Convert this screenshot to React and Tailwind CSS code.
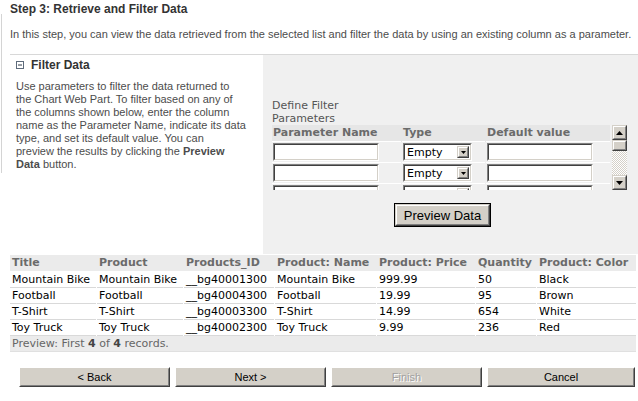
import React from "react";

function Inset({ className = "", children }) {
  return (
    <div className={`border border-t-[#808080] border-l-[#808080] border-b-white border-r-white ${className}`}>
      <div className="h-full border border-t-[#404040] border-l-[#404040] border-b-[#d4d0c8] border-r-[#d4d0c8] bg-white">
        {children}
      </div>
    </div>
  );
}

function Raised({ className = "", children }) {
  return (
    <div className={`border border-t-[#d4d0c8] border-l-[#d4d0c8] border-b-[#404040] border-r-[#404040] ${className}`}>
      <div className="h-full w-full border border-t-white border-l-white border-b-[#808080] border-r-[#808080] bg-[#d4d0c8] flex items-center justify-center">
        {children}
      </div>
    </div>
  );
}

function Down({ small }) {
  return small ? (
    <svg width="5" height="3" viewBox="0 0 5 3">
      <polygon points="0,0 5,0 2.5,3" fill="#000" />
    </svg>
  ) : (
    <svg width="7" height="4" viewBox="0 0 7 4">
      <polygon points="0,0 7,0 3.5,4" fill="#000" />
    </svg>
  );
}
function Up() {
  return (
    <svg width="7" height="4" viewBox="0 0 7 4">
      <polygon points="0,4 7,4 3.5,0" fill="#000" />
    </svg>
  );
}

function ParamRow({ hideText }) {
  return (
    <div className="grid grid-cols-[129px_83px_124px] gap-x-px">
      <div className="pl-px pt-px pb-px border-b border-white">
        <Inset className="w-[106px] h-[18px]" />
      </div>
      <div className="pl-px pt-px pb-px border-b border-white">
        <Inset className="w-[69px] h-[18px]">
          <div className="flex h-full items-start">
            <div className="flex-1 pl-[2px] pt-[1px] text-[11px] leading-[13px] text-black font-['DejaVu_Sans',sans-serif]">
              {hideText ? "" : "Empty"}
            </div>
            <Raised className="w-[12px] h-[12px] mt-px mr-px">
              <Down small />
            </Raised>
          </div>
        </Inset>
      </div>
      <div className="pl-px pt-px pb-px border-b border-white">
        <Inset className="w-[106px] h-[18px]" />
      </div>
    </div>
  );
}

const rows = [
  ["Mountain Bike", "Mountain Bike", "__bg40001300", "Mountain Bike", "999.99", "50", "Black"],
  ["Football", "Football", "__bg40004300", "Football", "19.99", "95", "Brown"],
  ["T-Shirt", "T-Shirt", "__bg40003300", "T-Shirt", "14.99", "654", "White"],
  ["Toy Truck", "Toy Truck", "__bg40002300", "Toy Truck", "9.99", "236", "Red"],
];
const heads = ["Title", "Product", "Products_ID", "Product: Name", "Product: Price", "Quantity", "Product: Color"];

function WizButton({ label, disabled, className = "w-[151px]" }) {
  return (
    <div className={`h-[20px] border border-t-white border-l-white border-b-[#404040] border-r-[#404040] ${className}`}>
      <div className="h-full w-full border border-t-[#d4d0c8] border-l-[#d4d0c8] border-b-[#808080] border-r-[#808080] bg-[#d4d0c8] flex items-center justify-center">
        <span
          className={
            disabled
              ? "text-[11px] leading-[13px] text-[#a0a0a0] [text-shadow:1px_1px_0_#ffffff]"
              : "text-[11px] leading-[13px] text-black"
          }
        >
          {label}
        </span>
      </div>
    </div>
  );
}

export default function App() {
  return (
    <div className="w-[638px] h-[401px] bg-white overflow-hidden flex font-['Liberation_Sans',Arial,sans-serif]">
      <div className="w-[2px] shrink-0">
        <div className="ml-px mt-[14px] h-[159px] w-px bg-[#d4d4d4]" />
      </div>
      <div className="w-[636px] shrink-0">
        <div className="pt-[2px] pl-[8px] text-[12px] leading-[14px] font-bold text-[#333333]">
          Step 3: Retrieve and Filter Data
        </div>
        <div className="mt-[12px] pl-[8px] text-[11px] leading-[13px] text-[#4c4c4c] whitespace-nowrap">
          In this step, you can view the data retrieved from the selected list and filter the data by using an existing column as a parameter.
        </div>
        <div className="mt-[13px] ml-[8px] h-px bg-[#d8d8d8]" />
        <div className="flex h-[199px]">
          <div className="ml-[8px] w-[253px] pl-[6px] pt-[3px]">
            <div className="flex items-center h-[14px]">
              <svg width="8" height="8" viewBox="0 0 8 8" className="shrink-0">
                <rect x="0.5" y="0.5" width="7" height="7" fill="#ffffff" stroke="#5d6b7b" />
                <line x1="2" y1="4" x2="6" y2="4" stroke="#2e3b48" strokeWidth="1" />
              </svg>
              <span className="ml-[7px] text-[12px] leading-[14px] font-bold text-[#333333]">Filter Data</span>
            </div>
            <div className="mt-[8px] text-[11px] leading-[13px] text-[#4c4c4c] whitespace-nowrap">
              Use parameters to filter the data returned to
              <br />
              the Chart Web Part. To filter based on any of
              <br />
              the columns shown below, enter the column
              <br />
              name as the Parameter Name, indicate its data
              <br />
              type, and set its default value. You can
              <br />
              preview the results by clicking the <b>Preview</b>
              <br />
              <b>Data</b> button.
            </div>
          </div>
          <div className="flex-1 bg-[#f0f0f0] pt-[44px] pl-[9px]">
            <div className="text-[11px] leading-[13px] text-[#555555] font-['DejaVu_Sans',sans-serif]">
              Define Filter
              <br />
              Parameters
            </div>
            <div className="flex h-[65px]">
              <div className="w-[338px] h-[65px] overflow-hidden font-['DejaVu_Sans',sans-serif]">
                <div className="grid grid-cols-[129px_83px_124px] gap-x-px bg-[#e6e6e6]">
                  {["Parameter Name", "Type", "Default value"].map((h) => (
                    <div key={h} className="pl-px h-[17px] border-b border-white text-[11px] leading-[16px] font-bold text-[#6b6b6b] whitespace-nowrap">
                      {h}
                    </div>
                  ))}
                </div>
                <ParamRow />
                <ParamRow />
                <ParamRow hideText />
              </div>
              <div className="ml-[2px] w-[15px] flex flex-col">
                <Raised className="w-[15px] h-[15px]">
                  <Up />
                </Raised>
                <Raised className="w-[15px] h-[11px]" />
                <div className="w-[15px] h-[24px] bg-[repeating-conic-gradient(#d4d0c8_0%_25%,#ffffff_0%_50%)] bg-size-[2px_2px]" />
                <Raised className="w-[15px] h-[15px]">
                  <Down />
                </Raised>
              </div>
            </div>
            <div className="mt-[13px] ml-[122px] w-[97px] h-[24px] border border-black">
              <Raised className="w-full h-full">
                <span className="text-[13px] leading-[15px] text-black">Preview Data</span>
              </Raised>
            </div>
          </div>
        </div>
        <div className="mt-px ml-[8px] w-[626px] font-['DejaVu_Sans',sans-serif] text-[11px]">
          <div className="grid grid-cols-[86px_86px_90px_101px_98px_60px_99px] gap-x-px bg-[#ebebeb] h-[16px] mb-px">
            {heads.map((h) => (
              <div key={h} className="pl-[2px] leading-[16px] font-bold text-[#6b6b6b] whitespace-nowrap">
                {h}
              </div>
            ))}
          </div>
          {rows.map((r, i) => (
            <div key={i} className="grid grid-cols-[86px_86px_90px_101px_98px_60px_99px] gap-x-px">
              {r.map((c, j) => (
                <div key={j} className="pl-[2px] h-[16px] leading-[15px] border-b border-[#d9d9d9] text-black whitespace-nowrap">
                  {c}
                </div>
              ))}
            </div>
          ))}
          <div className="h-[16px] bg-[#ebebeb] border-b border-[#e0e0e0] pl-[2px] leading-[15px] text-[#666666]">
            Preview: First <b className="text-[#444444]">4</b> of <b className="text-[#444444]">4</b> records.
          </div>
        </div>
        <div className="mt-[15px] ml-[17px] flex gap-[5px]">
          <WizButton label="< Back" />
          <WizButton label="Next >" />
          <WizButton label="Finish" disabled />
          <WizButton label="Cancel" className="w-[148px]" />
        </div>
      </div>
    </div>
  );
}
